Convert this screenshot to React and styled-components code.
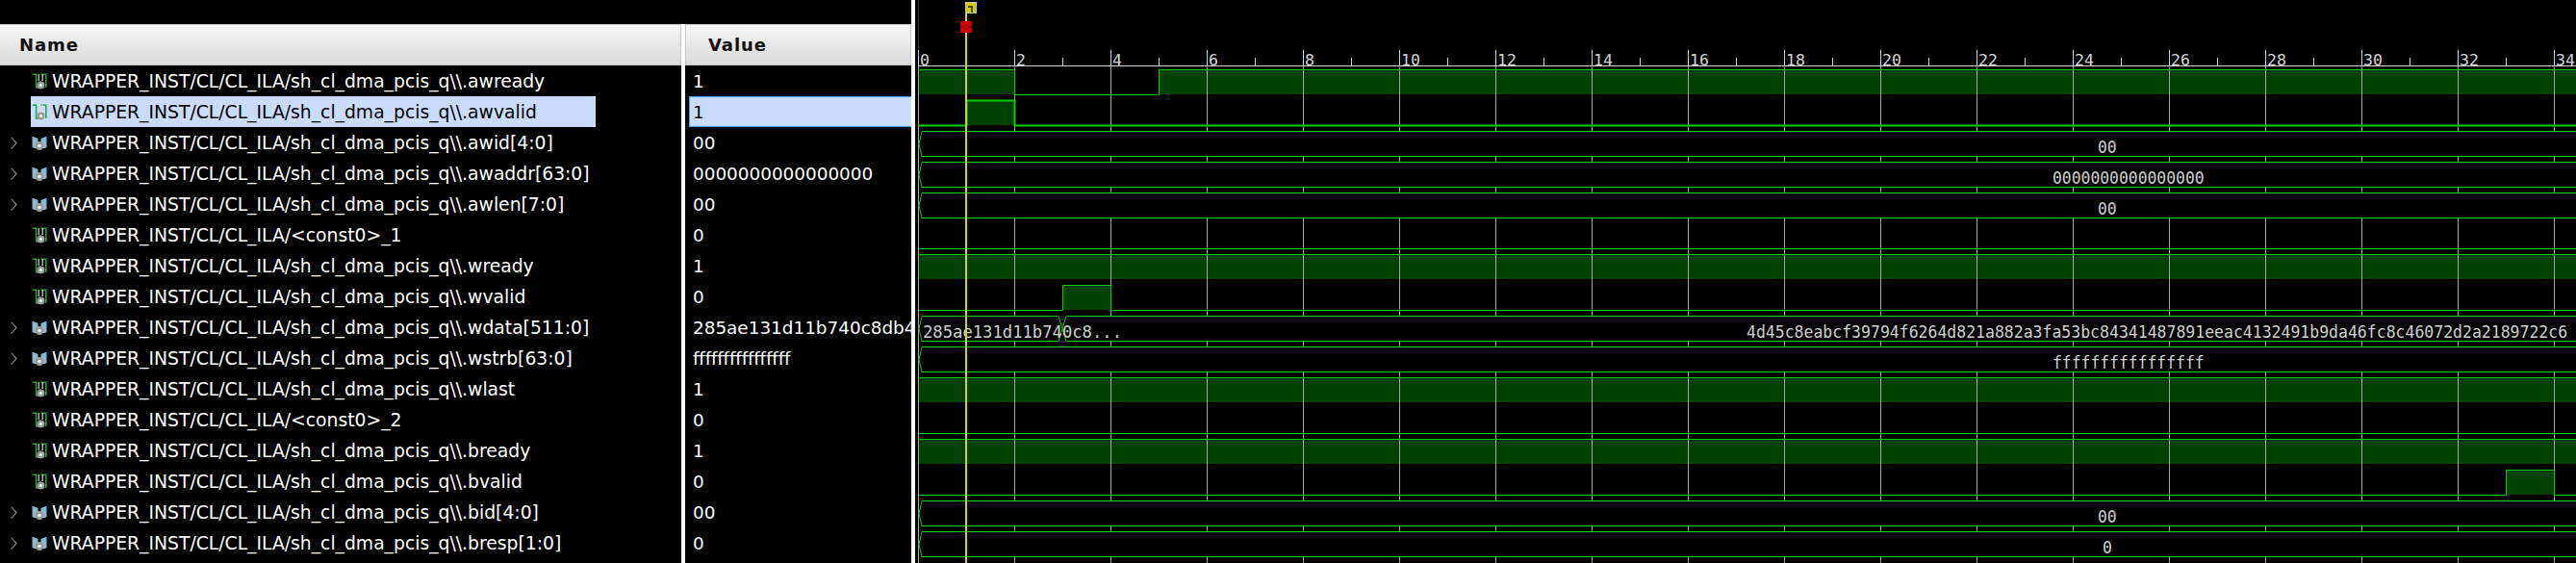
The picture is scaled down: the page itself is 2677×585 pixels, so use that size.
import React from "react";
import styled, { createGlobalStyle } from "styled-components";

const GlobalStyle = createGlobalStyle`
  html, body {
    margin: 0;
    background: #000;
  }
  body {
    font-family: "DejaVu Sans", sans-serif;
  }
`;

const P = "WRAPPER_INST/CL/CL_ILA/sh_cl_dma_pcis_q\\\\.";
const C = "WRAPPER_INST/CL/CL_ILA/<const0>_";

const SIGNALS = [
  { name: P + "awready", value: "1", wave: { type: "bit", edges: [[0, 1], [2, 0], [5, 1]] } },
  { name: P + "awvalid", value: "1", selected: true, wave: { type: "bit", edges: [[0, 0], [1, 1], [2, 0]] } },
  { name: P + "awid[4:0]", value: "00", bus: true, wave: { type: "bus", labels: [["00", 2180, 9.85]] } },
  { name: P + "awaddr[63:0]", value: "0000000000000000", bus: true, wave: { type: "bus", labels: [["0000000000000000", 2133, 9.85]] } },
  { name: P + "awlen[7:0]", value: "00", bus: true, wave: { type: "bus", labels: [["00", 2180, 9.85]] } },
  { name: C + "1", value: "0", wave: { type: "bit", edges: [[0, 0]] } },
  { name: P + "wready", value: "1", wave: { type: "bit", edges: [[0, 1]] } },
  { name: P + "wvalid", value: "0", wave: { type: "bit", edges: [[0, 0], [3, 1], [4, 0]] } },
  {
    name: P + "wdata[511:0]",
    value: "285ae131d11b740c8db4",
    bus: true,
    wave: {
      type: "bus",
      split: 3,
      labels: [
        ["285ae131d11b740c8...", 959, 10.35],
        ["4d45c8eabcf39794f6264d821a882a3fa53bc84341487891eeac4132491b9da46fc8c46072d2a2189722c6", 1815, 9.92],
      ],
    },
  },
  { name: P + "wstrb[63:0]", value: "ffffffffffffffff", bus: true, wave: { type: "bus", labels: [["ffffffffffffffff", 2133, 9.85]] } },
  { name: P + "wlast", value: "1", wave: { type: "bit", edges: [[0, 1]] } },
  { name: C + "2", value: "0", wave: { type: "bit", edges: [[0, 0]] } },
  { name: P + "bready", value: "1", wave: { type: "bit", edges: [[0, 1]] } },
  { name: P + "bvalid", value: "0", wave: { type: "bit", edges: [[0, 0], [33, 1], [34, 0]] } },
  { name: P + "bid[4:0]", value: "00", bus: true, wave: { type: "bus", labels: [["00", 2180, 9.85]] } },
  { name: P + "bresp[1:0]", value: "0", bus: true, wave: { type: "bus", labels: [["0", 2185, 9.85]] } },
];

// all wave coordinates are page coordinates, the svg gets a matching viewBox
const WAVE_LEFT = 951;
const ORIGIN = 954;
const UNIT = 50;
const RULER_Y = 68;
const ROW_H = 32;
const RIGHT = 2677;
const GREEN = "#00cc00";
const px = (t) => ORIGIN + t * UNIT;

const Page = styled.div`
  display: flex;
  width: 2677px;
  height: 585px;
  overflow: hidden;
  background: #000;
`;

const SignalPane = styled.div`
  display: flex;
  flex: none;
  box-sizing: border-box;
  width: ${WAVE_LEFT}px;
  height: 585px;
  padding-top: 25px;
  border-right: 4px solid #fff;
`;

const NameColumn = styled.div`
  flex: none;
  box-sizing: border-box;
  width: 712px;
  border-right: 4px solid #fff;
`;

const ValueColumn = styled.div`
  flex: 1;
  min-width: 0;
`;

const HeaderCell = styled.div`
  display: flex;
  align-items: center;
  box-sizing: border-box;
  height: 43px;
  padding-left: ${(p) => p.$indent}px;
  background: linear-gradient(#f6f6f6, #dadada);
  border: 1px solid #c6c6c6;
  border-left: ${(p) => (p.$first ? "none" : "1px solid #c6c6c6")};
  color: #111;
  font-size: 18px;
  font-weight: 700;
  letter-spacing: 0.9px;
`;

const NameRow = styled.div`
  display: flex;
  align-items: center;
  height: ${ROW_H}px;
`;

const ExpandSlot = styled.div`
  display: flex;
  align-items: center;
  justify-content: flex-start;
  flex: none;
  width: 32px;
  padding-left: 11px;
  box-sizing: border-box;
`;

const NameChip = styled.div`
  display: flex;
  align-items: center;
  gap: 5px;
  height: 32px;
  padding-left: 1px;
  padding-right: ${(p) => (p.$selected ? 61 : 0)}px;
  background: ${(p) => (p.$selected ? "#c9dcfb" : "transparent")};
  color: ${(p) => (p.$selected ? "#000" : "#fff")};
  font-size: 18.75px;
  white-space: nowrap;
`;

const ValueRow = styled.div`
  display: flex;
  align-items: center;
  box-sizing: border-box;
  height: ${ROW_H}px;
  margin-left: 4px;
  padding-left: ${(p) => (p.$selected ? 3 : 4)}px;
  overflow: hidden;
  background: ${(p) => (p.$selected ? "#c9dcfb" : "transparent")};
  border: ${(p) => (p.$selected ? "1px solid #4a9bd8" : "none")};
  border-right: none;
  color: ${(p) => (p.$selected ? "#000" : "#fff")};
  font-size: 18.4px;
  white-space: nowrap;
`;

const WaveCanvas = styled.svg`
  display: block;
  flex: none;
  width: ${RIGHT - WAVE_LEFT}px;
  height: 585px;
`;

const RulerLabel = styled.text`
  fill: #d4d4d4;
  font-family: "DejaVu Sans Mono", monospace;
  font-size: 16.5px;
`;

const BusLabel = styled.text`
  fill: #d0d0d0;
  font-family: "DejaVu Sans Mono", monospace;
  font-size: 18px;
`;

function LogicIcon() {
  return (
    <svg width="16" height="17" viewBox="0 0 16 17" style={{ flex: "none" }}>
      <path d="M0.8 1.2H4.6V15H8M9.5 1.2H14.8V15" fill="none" stroke="#1fa644" strokeWidth="1.5" />
      <path d="M7.2 1V8.5" fill="none" stroke="#dcdcdc" strokeWidth="1.2" />
      <path d="M11.2 1V8" fill="none" stroke="#dcdcdc" strokeWidth="1.2" />
      <circle cx="9.5" cy="12.5" r="4" fill="#9c9c9c" />
      <circle cx="9.5" cy="12.5" r="1.5" fill="#f2f2f2" />
    </svg>
  );
}

function BusIcon() {
  return (
    <svg width="16" height="17" viewBox="0 0 16 17" style={{ flex: "none" }}>
      <path d="M0.5 1.5L6.5 4V14H2L0.5 12.5Z" fill="#86b8d8" />
      <path d="M15.5 1.5L9.5 4V14H14L15.5 12.5Z" fill="#86b8d8" />
      <circle cx="8" cy="11.5" r="4.5" fill="#9c9c9c" />
      <circle cx="8" cy="11.5" r="1.7" fill="#f2f2f2" />
    </svg>
  );
}

function Chevron() {
  return (
    <svg width="7" height="13" viewBox="0 0 7 13">
      <path d="M0.7 0.7L6.2 6.5L0.7 12.3" fill="none" stroke="#7c7c7c" strokeWidth="1.2" />
    </svg>
  );
}

function Ruler() {
  const marks = Array.from({ length: 35 }, (_, i) => i);
  return (
    <g>
      <path d={`M${ORIGIN + 0.5} 0V52`} stroke="#2c2c2c" />
      <path d={`M${ORIGIN} ${RULER_Y + 0.5}H${RIGHT}`} stroke="#cfcfcf" />
      {marks.map((t) => {
        const x = px(t) + 0.5;
        if (t % 2) return <path key={t} d={`M${x} 60V${RULER_Y}`} stroke="#cfcfcf" />;
        return (
          <g key={t}>
            <path d={`M${x} 52V${RULER_Y}`} stroke="#cfcfcf" />
            <RulerLabel x={x + 1.5} y={68}>
              {t}
            </RulerLabel>
          </g>
        );
      })}
    </g>
  );
}

function GridLines() {
  const marks = Array.from({ length: 18 }, (_, i) => i * 2);
  return (
    <g>
      {marks.map((t) => (
        <path key={t} d={`M${px(t) + 0.5} ${RULER_Y}V585`} stroke="#a4a4a4" />
      ))}
    </g>
  );
}

function BitFill({ wave, top }) {
  const high = top + 4;
  const low = top + 30;
  return wave.edges.map(([t, level], i) => {
    const next = wave.edges[i + 1];
    const x1 = px(t);
    const x2 = next ? px(next[0]) : RIGHT;
    if (!level) return null;
    return <rect key={t} x={x1} y={high} width={x2 - x1} height={low - high} fill="rgba(0, 160, 0, 0.4)" />;
  });
}

function BitLine({ wave, top, selected }) {
  const high = top + 4.5;
  const low = top + 30.5;
  let d = "";
  wave.edges.forEach(([t, level], i) => {
    const y = level ? high : low;
    const next = wave.edges[i + 1];
    const x1 = px(t) + 0.5;
    d += i === 0 ? `M${x1} ${y}` : `V${y}`;
    d += `H${next ? px(next[0]) + 0.5 : RIGHT}`;
  });
  return <path d={d} fill="none" stroke={GREEN} strokeWidth={selected ? 2 : 1} />;
}

function BusShape({ wave, top }) {
  const t = top + 4.5;
  const b = top + 30.5;
  const m = (t + b) / 2;
  const start = ORIGIN + 1;
  let d;
  if (wave.split) {
    const sx = px(wave.split);
    d = `M${start + 3} ${t}H${sx - 4}L${sx + 4} ${b}H${RIGHT + 5}V${t}H${sx + 4}L${sx - 4} ${b}H${start + 3}L${start} ${m}Z`;
  } else {
    d = `M${start + 3} ${t}H${RIGHT + 5}V${b}H${start + 3}L${start} ${m}Z`;
  }
  return <path d={d} fill="#000" stroke={GREEN} />;
}

function Cursor() {
  return (
    <g>
      <path d="M1004 2V585" stroke="#d6d600" strokeWidth="2" />
      <rect x="1003.5" y="2.5" width="11" height="11" fill="#cfcf00" stroke="#c4c4c4" />
      <path d="M1006 7H1010V13" fill="none" stroke="#222" strokeWidth="1.5" />
      <rect x="998" y="22" width="12" height="12" fill="#cc0000" />
      <path d="M998 28H1002M1006 28H1010" stroke="#400000" />
    </g>
  );
}

function Waveform() {
  return (
    <WaveCanvas viewBox={`${WAVE_LEFT} 0 ${RIGHT - WAVE_LEFT} 585`}>
      {SIGNALS.map((s, i) =>
        s.wave.type === "bit" ? <BitFill key={i} wave={s.wave} top={RULER_Y + i * ROW_H} /> : null
      )}
      <GridLines />
      <Ruler />
      {SIGNALS.map((s, i) => {
        const top = RULER_Y + i * ROW_H;
        if (s.wave.type === "bit") return <BitLine key={i} wave={s.wave} top={top} selected={s.selected} />;
        return (
          <g key={i}>
            <BusShape wave={s.wave} top={top} />
            {s.wave.labels.map(([text, x, charW]) => (
              <BusLabel
                key={x}
                x={x}
                y={top + 27}
                textLength={text.length * charW}
                lengthAdjust="spacingAndGlyphs"
              >
                {text}
              </BusLabel>
            ))}
          </g>
        );
      })}
      <Cursor />
    </WaveCanvas>
  );
}

export default function App() {
  return (
    <Page>
      <GlobalStyle />
      <SignalPane>
        <NameColumn>
          <HeaderCell $first $indent={20}>Name</HeaderCell>
          {SIGNALS.map((s) => (
            <NameRow key={s.name}>
              <ExpandSlot>{s.bus && <Chevron />}</ExpandSlot>
              <NameChip $selected={s.selected}>
                {s.bus ? <BusIcon /> : <LogicIcon />}
                {s.name}
              </NameChip>
            </NameRow>
          ))}
        </NameColumn>
        <ValueColumn>
          <HeaderCell $indent={23}>Value</HeaderCell>
          {SIGNALS.map((s) => (
            <ValueRow key={s.name} $selected={s.selected}>
              {s.value}
            </ValueRow>
          ))}
        </ValueColumn>
      </SignalPane>
      <Waveform />
    </Page>
  );
}
